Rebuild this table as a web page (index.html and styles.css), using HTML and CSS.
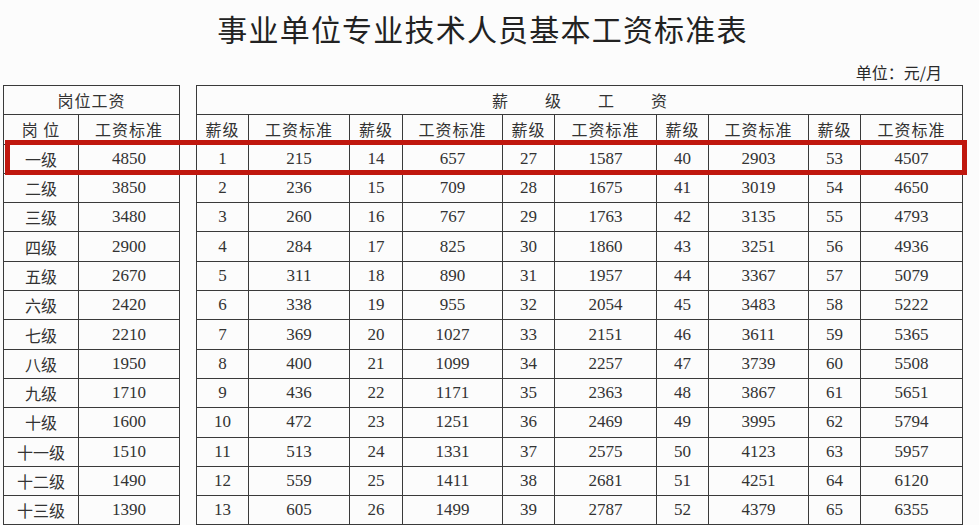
FILE: index.html
```html
<!DOCTYPE html>
<html lang="zh-CN">
<head>
<meta charset="utf-8">
<title>事业单位专业技术人员基本工资标准表</title>
<link rel="stylesheet" href="styles.css">
</head>
<body>
<div class="page">
  <h1 class="title">事业单位专业技术人员基本工资标准表</h1>
  <div class="unit">单位：元/月</div>
  <div class="tables">
    <table class="grid left">
      <colgroup><col style="width:75px"><col style="width:101px"></colgroup>
      <thead>
        <tr><th colspan="2">岗位工资</th></tr>
        <tr><th>岗 位</th><th>工资标准</th></tr>
      </thead>
      <tbody>
        <tr><td>一级</td><td>4850</td></tr>
        <tr><td>二级</td><td>3850</td></tr>
        <tr><td>三级</td><td>3480</td></tr>
        <tr><td>四级</td><td>2900</td></tr>
        <tr><td>五级</td><td>2670</td></tr>
        <tr><td>六级</td><td>2420</td></tr>
        <tr><td>七级</td><td>2210</td></tr>
        <tr><td>八级</td><td>1950</td></tr>
        <tr><td>九级</td><td>1710</td></tr>
        <tr><td>十级</td><td>1600</td></tr>
        <tr><td>十一级</td><td>1510</td></tr>
        <tr><td>十二级</td><td>1490</td></tr>
        <tr><td>十三级</td><td>1390</td></tr>
      </tbody>
    </table>
    <table class="grid right">
      <colgroup>
        <col style="width:52px"><col style="width:101px">
        <col style="width:53px"><col style="width:100px">
        <col style="width:52px"><col style="width:102px">
        <col style="width:52px"><col style="width:100px">
        <col style="width:52px"><col style="width:102px">
      </colgroup>
      <thead>
        <tr><th colspan="10" class="spread">薪级工资</th></tr>
        <tr><th>薪级</th><th>工资标准</th><th>薪级</th><th>工资标准</th><th>薪级</th><th>工资标准</th><th>薪级</th><th>工资标准</th><th>薪级</th><th>工资标准</th></tr>
      </thead>
      <tbody>
        <tr><td>1</td><td>215</td><td>14</td><td>657</td><td>27</td><td>1587</td><td>40</td><td>2903</td><td>53</td><td>4507</td></tr>
        <tr><td>2</td><td>236</td><td>15</td><td>709</td><td>28</td><td>1675</td><td>41</td><td>3019</td><td>54</td><td>4650</td></tr>
        <tr><td>3</td><td>260</td><td>16</td><td>767</td><td>29</td><td>1763</td><td>42</td><td>3135</td><td>55</td><td>4793</td></tr>
        <tr><td>4</td><td>284</td><td>17</td><td>825</td><td>30</td><td>1860</td><td>43</td><td>3251</td><td>56</td><td>4936</td></tr>
        <tr><td>5</td><td>311</td><td>18</td><td>890</td><td>31</td><td>1957</td><td>44</td><td>3367</td><td>57</td><td>5079</td></tr>
        <tr><td>6</td><td>338</td><td>19</td><td>955</td><td>32</td><td>2054</td><td>45</td><td>3483</td><td>58</td><td>5222</td></tr>
        <tr><td>7</td><td>369</td><td>20</td><td>1027</td><td>33</td><td>2151</td><td>46</td><td>3611</td><td>59</td><td>5365</td></tr>
        <tr><td>8</td><td>400</td><td>21</td><td>1099</td><td>34</td><td>2257</td><td>47</td><td>3739</td><td>60</td><td>5508</td></tr>
        <tr><td>9</td><td>436</td><td>22</td><td>1171</td><td>35</td><td>2363</td><td>48</td><td>3867</td><td>61</td><td>5651</td></tr>
        <tr><td>10</td><td>472</td><td>23</td><td>1251</td><td>36</td><td>2469</td><td>49</td><td>3995</td><td>62</td><td>5794</td></tr>
        <tr><td>11</td><td>513</td><td>24</td><td>1331</td><td>37</td><td>2575</td><td>50</td><td>4123</td><td>63</td><td>5957</td></tr>
        <tr><td>12</td><td>559</td><td>25</td><td>1411</td><td>38</td><td>2681</td><td>51</td><td>4251</td><td>64</td><td>6120</td></tr>
        <tr><td>13</td><td>605</td><td>26</td><td>1499</td><td>39</td><td>2787</td><td>52</td><td>4379</td><td>65</td><td>6355</td></tr>
      </tbody>
    </table>
    <div class="highlight"></div>
  </div>
</div>
</body>
</html>
```

FILE: styles.css
```css
html, body {
  margin: 0;
  padding: 0;
  overflow: hidden;
  background: #fcfcfc;
}
.page {
  width: 979px;
  height: 525px;
  font-family: "Liberation Serif", "Noto Sans CJK SC", serif;
  color: #333;
}
.title {
  margin: 0;
  height: 58px;
  line-height: 56px;
  text-align: center;
  font-family: "Noto Sans CJK SC", sans-serif;
  font-weight: 400;
  font-size: 30px;
  letter-spacing: 1.2px;
  color: #222;
  padding-right: 14px;
}
.unit {
  height: 27px;
  line-height: 29px;
  text-align: right;
  padding-right: 37px;
  font-family: "Noto Sans CJK SC", sans-serif;
  font-size: 16px;
  color: #2a2a2a;
}
.tables {
  position: relative;
  display: flex;
  align-items: flex-start;
  gap: 16px;
  padding-left: 3px;
}
.grid {
  border-collapse: collapse;
  table-layout: fixed;
}
.grid.left { width: 176px; }
.grid.right { width: 766px; }
.grid th,
.grid td {
  border: 1.5px solid #3a3a3a;
  height: 28.3px;
  padding: 0;
  text-align: center;
  vertical-align: middle;
  font-weight: 400;
  font-size: 17px;
  line-height: 20px;
  white-space: nowrap;
  color: #333;
}
.grid th {
  font-family: "Noto Sans CJK SC", sans-serif;
  font-size: 16px;
  letter-spacing: 1px;
}
.grid.left td:first-child {
  font-family: "Noto Sans CJK SC", sans-serif;
  font-size: 16px;
}
.grid th.spread {
  letter-spacing: 37px;
  text-indent: 37px;
}
.highlight {
  position: absolute;
  left: 5px;
  top: 55px;
  width: 952px;
  height: 25px;
  border: 5px solid #c0170e;
  pointer-events: none;
}
```
